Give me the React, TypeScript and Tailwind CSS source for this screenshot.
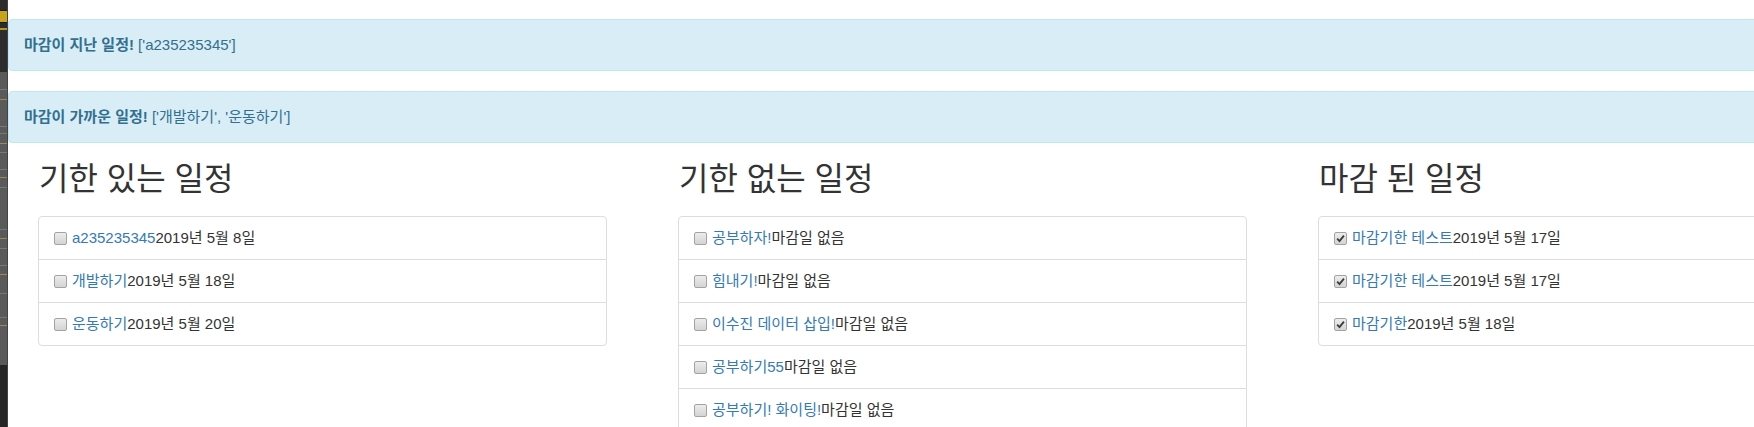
import { Fragment } from "react";

type Todo = { title: string; due: string; done?: boolean };

const WITH_DUE: Todo[] = [
  { title: "a235235345", due: "2019년 5월 8일" },
  { title: "개발하기", due: "2019년 5월 18일" },
  { title: "운동하기", due: "2019년 5월 20일" },
];

const NO_DUE: Todo[] = [
  { title: "공부하자!", due: "마감일 없음" },
  { title: "힘내기!", due: "마감일 없음" },
  { title: "이수진 데이터 삽입!", due: "마감일 없음" },
  { title: "공부하기55", due: "마감일 없음" },
  { title: "공부하기! 화이팅!", due: "마감일 없음" },
];

const CLOSED: Todo[] = [
  { title: "마감기한 테스트", due: "2019년 5월 17일", done: true },
  { title: "마감기한 테스트", due: "2019년 5월 17일", done: true },
  { title: "마감기한", due: "2019년 5월 18일", done: true },
];

const COLUMNS = [
  { heading: "기한 있는 일정", items: WITH_DUE },
  { heading: "기한 없는 일정", items: NO_DUE },
  { heading: "마감 된 일정", items: CLOSED },
];

// gaps between the thin lines on the editor strip at the far left
const STRIP_LINES = [17, 9, 26, 6, 9, 8, 16, 7, 9, 41, 8, 9, 16, 8, 18, 23, 7];

function Checkbox({ checked }: { checked?: boolean }) {
  return (
    <span className="flex h-[13px] w-[13px] shrink-0 items-center justify-center rounded-[2px] border border-[#a3a3a3] bg-linear-to-b from-[#ececec] to-[#d4d4d4]">
      {checked && (
        <svg viewBox="0 0 10 10" className="h-[9px] w-[9px]">
          <path d="M1.3 5.2 L3.9 7.9 L8.8 1.8" fill="none" stroke="#3a3a3a" strokeWidth="2" />
        </svg>
      )}
    </span>
  );
}

function EditorStrip() {
  return (
    <div className="flex w-[8px] shrink-0 flex-col bg-[#2c2c2c] border-r border-[#444]">
      <div className="h-[10px]" />
      <div className="h-[13px] border-y border-[#1a1a1a] bg-[#c9a31c]" />
      <div className="mt-[5px] h-[2px] bg-[#b8941c]" />
      <div className="h-[42px]" />
      <div className="flex h-[293px] flex-col bg-[#5a5a5a]">
        {STRIP_LINES.map((gap, i) => (
          <div
            key={i}
            className={i % 3 === 1 ? "h-px bg-[#9a8a5a]" : "h-px bg-[#787878]"}
            style={{ marginTop: gap }}
          />
        ))}
      </div>
      <div className="flex-1 bg-[#262626]" />
    </div>
  );
}

function Alert({ label, value }: { label: string; value: string }) {
  return (
    <div className="rounded-l-[4px] border border-[#bce8f1] bg-[#d9edf7] px-[15px] py-[15px] text-[15px] leading-[20px] text-[#31708f]">
      <strong className="font-bold">{label}</strong> {value}
    </div>
  );
}

export default function App() {
  return (
    <div className="flex h-[427px] w-full overflow-hidden bg-white font-['Liberation_Sans','Noto_Sans_CJK_KR',sans-serif] text-[15px] leading-[20px] text-[#333]">
      <EditorStrip />
      <div className="flex w-[1920px] shrink-0 flex-col pt-[19px]">
        <Alert label="마감이 지난 일정!" value="['a235235345']" />
        <div className="mt-[20px]">
          <Alert label="마감이 가까운 일정!" value="['개발하기', '운동하기']" />
        </div>

        <div className="flex gap-[71px] pl-[30px]">
          {COLUMNS.map((col) => (
            <div key={col.heading} className="flex w-[569px] shrink-0 flex-col">
              <h2 className="mt-[20px] pl-[1px] text-[32px] leading-[33px] font-normal text-[#333]">
                {col.heading}
              </h2>
              <ul className="mt-[20px] divide-y divide-[#ddd] rounded-[4px] border border-[#ddd] bg-white">
                {col.items.map((item, i) => (
                  <li key={i} className="flex items-center gap-[5px] py-[11px] pl-[15px]">
                    <Checkbox checked={item.done} />
                    <span className="whitespace-nowrap">
                      <Fragment>
                        <a className="text-[#337ab7]">{item.title}</a>
                        {item.due}
                      </Fragment>
                    </span>
                  </li>
                ))}
              </ul>
            </div>
          ))}
        </div>
      </div>
    </div>
  );
}
